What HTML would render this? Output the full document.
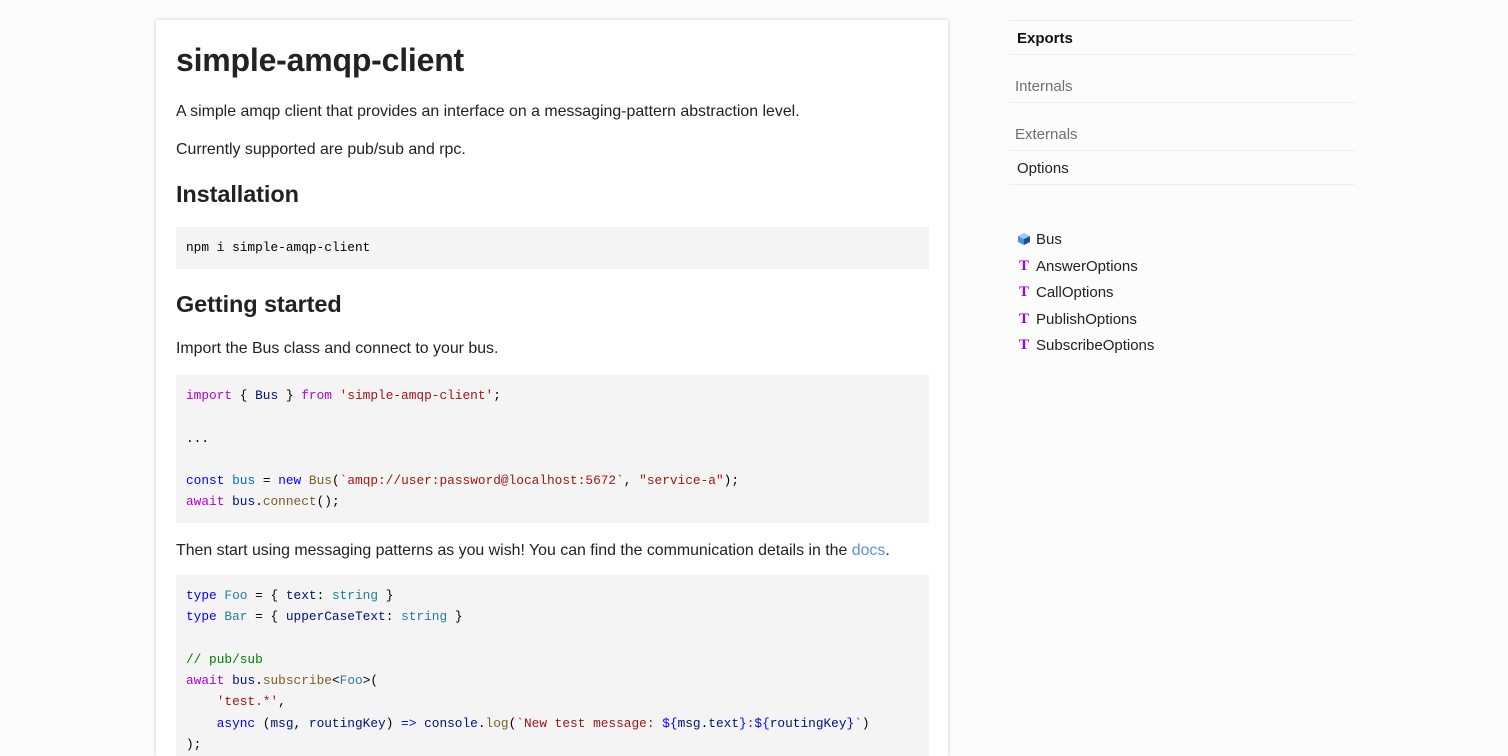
<!DOCTYPE html>
<html style="height:756px;overflow:hidden"><head><meta charset="utf-8"><style>
body{margin:0;background:#fcfcfc;font-family:"Liberation Sans",sans-serif;color:#222;width:1508px;height:756px;overflow:hidden;position:relative}
.card{position:absolute;left:156px;top:20px;width:792px;height:736px;background:#fff;box-shadow:0 0 4px rgba(0,0,0,.22);overflow:hidden}
h1{font-size:32px;margin:0;position:absolute;top:22px;left:20px;letter-spacing:-0.2px}
.t{position:absolute;left:20px;font-size:15.9px;white-space:nowrap}
h2{position:absolute;left:20px;margin:0;font-size:23.5px;letter-spacing:-0.1px}
pre{position:absolute;left:20px;width:753px;margin:0;background:#f4f4f4;font-family:"Liberation Mono",monospace;font-size:12.8px;line-height:21.3px;padding:10px;box-sizing:border-box;color:#000}
.k{color:#0000ff}.p{color:#af00db}.s{color:#a31515}.f{color:#795e26}.v{color:#001080}.ty{color:#267f99}.c{color:#008000}
a{color:#5d8fe0;text-decoration:none}
.sb{position:absolute;left:1009px;width:346px;font-size:15px}
.ln{position:absolute;left:1009px;width:346px;height:1px;background:#eee}
.si{position:absolute;left:1036px;font-size:15px;color:#222}
.T{position:absolute;left:1019px;color:#9600ff;font-family:"Liberation Serif",serif;font-size:15px;font-weight:bold}
</style></head><body>
<div class="card">
<h1>simple-amqp-client</h1>
<div class="t" style="top:83px">A simple amqp client that provides an interface on a messaging-pattern abstraction level.</div>
<div class="t" style="top:121px">Currently supported are pub/sub and rpc.</div>
<h2 style="top:161px">Installation</h2>
<pre style="top:207px;height:42px">npm i simple-amqp-client</pre>
<h2 style="top:271px">Getting started</h2>
<div class="t" style="top:320px">Import the Bus class and connect to your bus.</div>
<pre style="top:355px;height:148px"><span class="p">import</span> { <span class="v">Bus</span> } <span class="p">from</span> <span class="s">'simple-amqp-client'</span>;

...

<span class="k">const</span> <span class="v" style="color:#0070c1">bus</span> = <span class="k">new</span> <span class="f">Bus</span>(<span class="s">`amqp://user:password@localhost:5672`</span>, <span class="s">"service-a"</span>);
<span class="p">await</span> <span class="v">bus</span>.<span class="f">connect</span>();</pre>
<div class="t" style="top:522px">Then start using messaging patterns as you wish! You can find the communication details in the <a>docs</a>.</div>
<pre style="top:555px;height:200px"><span class="k">type</span> <span class="ty">Foo</span> = { <span class="v">text</span>: <span class="ty">string</span> }
<span class="k">type</span> <span class="ty">Bar</span> = { <span class="v">upperCaseText</span>: <span class="ty">string</span> }

<span class="c">// pub/sub</span>
<span class="p">await</span> <span class="v">bus</span>.<span class="f">subscribe</span>&lt;<span class="ty">Foo</span>&gt;(
    <span class="s">'test.*'</span>,
    <span class="k">async</span> (<span class="v">msg</span>, <span class="v">routingKey</span>) <span class="k">=&gt;</span> <span class="v">console</span>.<span class="f">log</span>(<span class="s">`New test message: </span><span class="k">${</span><span class="v">msg</span>.<span class="v">text</span><span class="k">}</span><span class="s">:</span><span class="k">${</span><span class="v">routingKey</span><span class="k">}</span><span class="s">`</span>)
);</pre>
</div>
<div class="ln" style="top:20px"></div>
<div class="sb" style="top:30px;left:1017px;font-weight:bold;color:#111">Exports</div>
<div class="ln" style="top:54px"></div>
<div class="sb" style="top:78px;left:1015px;color:#707070">Internals</div>
<div class="ln" style="top:102px"></div>
<div class="sb" style="top:126px;left:1015px;color:#707070">Externals</div>
<div class="ln" style="top:150px"></div>
<div class="sb" style="top:160px;left:1017px;color:#222">Options</div>
<div class="ln" style="top:184px"></div>
<svg style="position:absolute;left:1017px;top:232px" width="14" height="14" viewBox="0 0 14 14"><path d="M7 1L13 4L7 7L1 4Z" fill="#9cc8f5"/><path d="M1 4L7 7V13L1 10Z" fill="#4a90e2"/><path d="M13 4L7 7V13L13 10Z" fill="#1f4f86"/></svg>
<div class="si" style="top:231px">Bus</div>
<div class="T" style="top:258px">T</div><div class="si" style="top:258px">AnswerOptions</div>
<div class="T" style="top:284px">T</div><div class="si" style="top:284px">CallOptions</div>
<div class="T" style="top:311px">T</div><div class="si" style="top:311px">PublishOptions</div>
<div class="T" style="top:337px">T</div><div class="si" style="top:337px">SubscribeOptions</div>
</body></html>
